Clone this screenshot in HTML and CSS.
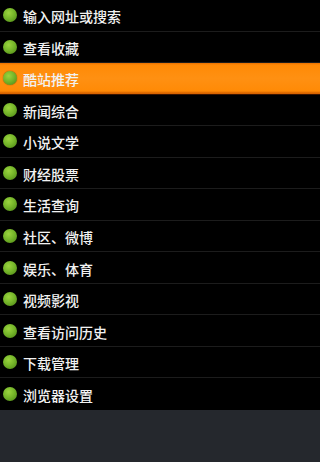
FILE: index.html
```html
<!DOCTYPE html>
<html lang="zh-CN">
<head>
<meta charset="utf-8">
<link rel="stylesheet" href="styles.css">
</head>
<body>
<ul class="menu">
  <li class="item"><span class="dot"></span><span class="label">输入网址或搜索</span></li>
  <li class="item"><span class="dot"></span><span class="label">查看收藏</span></li>
  <li class="item active"><span class="dot"></span><span class="label">酷站推荐</span></li>
  <li class="item"><span class="dot"></span><span class="label">新闻综合</span></li>
  <li class="item"><span class="dot"></span><span class="label">小说文学</span></li>
  <li class="item"><span class="dot"></span><span class="label">财经股票</span></li>
  <li class="item"><span class="dot"></span><span class="label">生活查询</span></li>
  <li class="item"><span class="dot"></span><span class="label">社区、微博</span></li>
  <li class="item"><span class="dot"></span><span class="label">娱乐、体育</span></li>
  <li class="item"><span class="dot"></span><span class="label">视频影视</span></li>
  <li class="item"><span class="dot"></span><span class="label">查看访问历史</span></li>
  <li class="item"><span class="dot"></span><span class="label">下载管理</span></li>
  <li class="item"><span class="dot"></span><span class="label">浏览器设置</span></li>
</ul>
</body>
</html>
```
FILE: styles.css
```css
html, body {
  margin: 0;
  padding: 0;
  height: 100%;
  background: #25282d;
}
.menu {
  list-style: none;
  margin: 0;
  padding: 0;
  height: 410px;
  background: #000;
  display: grid;
  grid-template-rows: repeat(13, 1fr);
  font-family: "Noto Sans CJK SC", "Noto Sans", sans-serif;
}
.item {
  display: flex;
  align-items: center;
  gap: 6px;
  padding-left: 3px;
  border-bottom: 1px solid #1c1c1c;
  color: #f2f2f2;
  font-size: 14px;
  font-weight: 500;
  line-height: 1;
}
.item:last-child {
  border-bottom: none;
}
.item.active {
  background: linear-gradient(to bottom, #e86f00 0px, #ff8a06 2px, #ff9012 50%, #ff8a06 calc(100% - 3px), #d86400 calc(100% - 1px));
  border-bottom-color: #3a1400;
}
.dot {
  width: 14px;
  height: 14px;
  border-radius: 50%;
  flex: none;
  background: radial-gradient(circle at 40% 35%, #9bd43e 0%, #76b62a 45%, #4a8314 100%);
  box-shadow: 0 0 1px rgba(0,0,0,0.7);
}
.label {
  transform: translateY(0.5px);
}
```
